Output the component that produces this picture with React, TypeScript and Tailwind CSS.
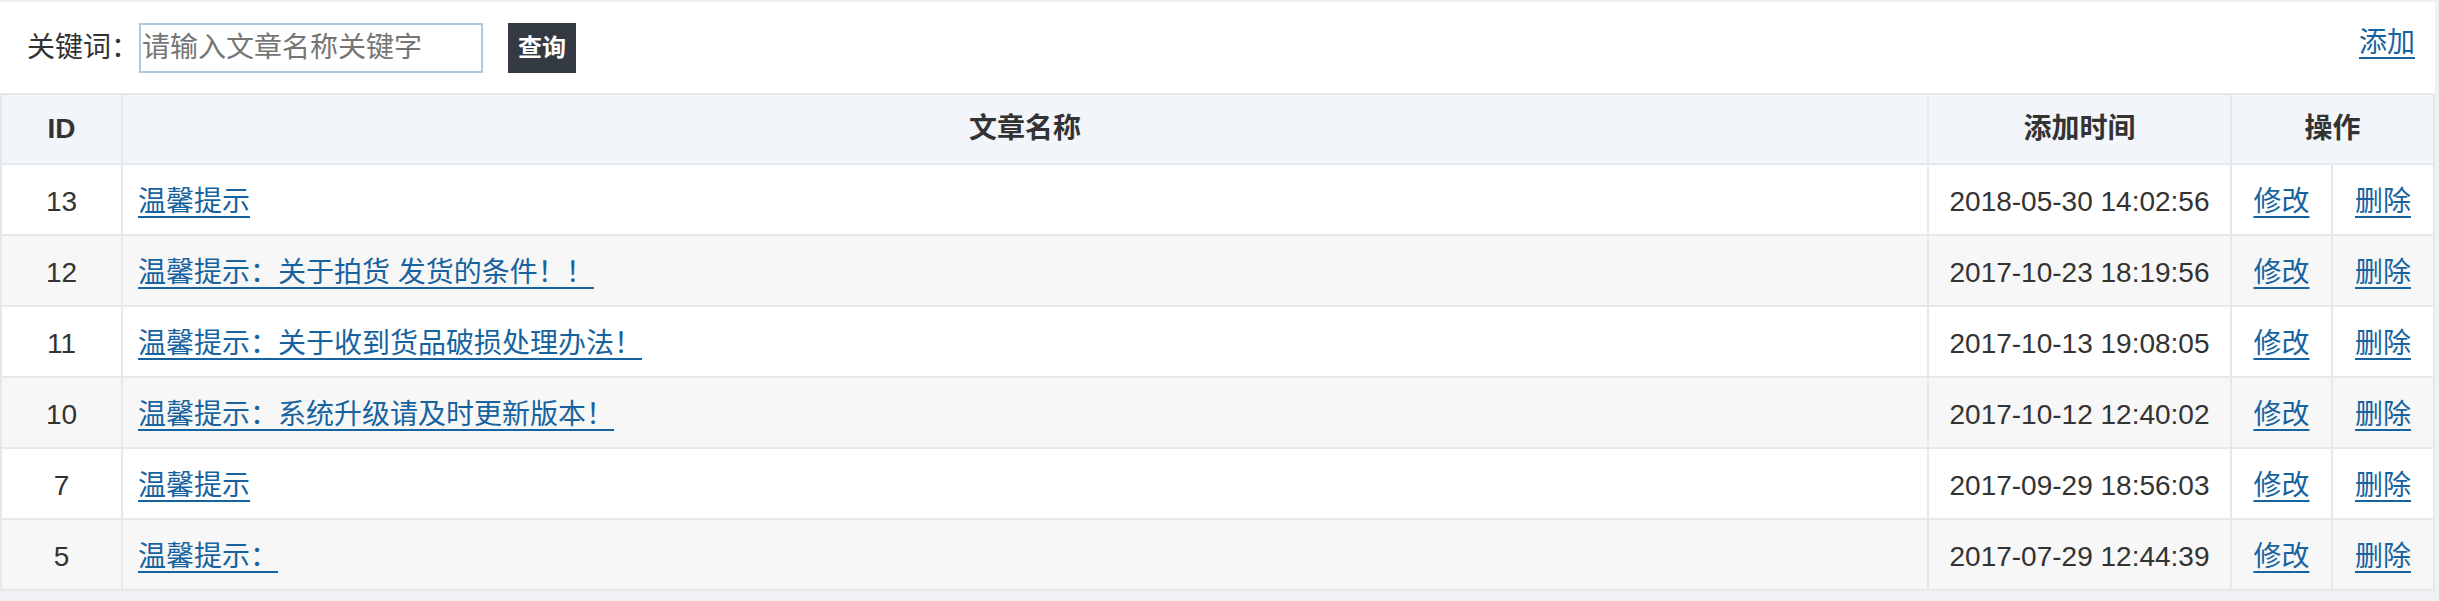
import { useState } from "react";

interface Article {
  id: number;
  title: string;
  createdAt: string;
}

const ARTICLES: Article[] = [
  { id: 13, title: "温馨提示", createdAt: "2018-05-30 14:02:56" },
  { id: 12, title: "温馨提示：关于拍货 发货的条件！！", createdAt: "2017-10-23 18:19:56" },
  { id: 11, title: "温馨提示：关于收到货品破损处理办法！", createdAt: "2017-10-13 19:08:05" },
  { id: 10, title: "温馨提示：系统升级请及时更新版本！", createdAt: "2017-10-12 12:40:02" },
  { id: 7, title: "温馨提示", createdAt: "2017-09-29 18:56:03" },
  { id: 5, title: "温馨提示：", createdAt: "2017-07-29 12:44:39" },
];

const LINK = "text-[#17639f] underline underline-offset-[5px] decoration-[2px]";

export default function App() {
  const [keyword, setKeyword] = useState("");

  return (
    <div className="min-h-screen bg-[#eff1f4] pt-[2px] pr-[4px] font-['Liberation_Sans','Noto_Sans_CJK_SC',sans-serif] text-[28px] text-[#333]">
      <div className="bg-white">
        {/* search bar */}
        <div className="flex h-[91px] items-center pl-[27px] pr-[20px]">
          <label htmlFor="kw" className="leading-[42px]">
            关键词：
          </label>
          <input
            id="kw"
            value={keyword}
            onChange={(e) => setKeyword(e.target.value)}
            placeholder="请输入文章名称关键字"
            className="h-[50px] w-[344px] border-2 border-[#accbe2] px-[1px] text-[28px] text-[#333] outline-none placeholder:text-[#757575]"
          />
          <button className="ml-[25px] h-[50px] w-[68px] bg-[#343a44] text-[24px] font-bold text-white">
            查询
          </button>
          <a href="#" className={`ml-auto self-start mt-[20px] leading-[42px] ${LINK}`}>
            添加
          </a>
        </div>

        {/* list */}
        <div className="grid grid-cols-[119px_1fr_301px_99px_100px] gap-[2px] bg-[#e5e8ec] p-[2px]">
          <div className="flex h-[68px] items-center justify-center bg-[#f2f5f9] font-bold">ID</div>
          <div className="flex items-center justify-center bg-[#f2f5f9] font-bold">文章名称</div>
          <div className="flex items-center justify-center bg-[#f2f5f9] font-bold">添加时间</div>
          <div className="col-span-2 flex items-center justify-center bg-[#f2f5f9] font-bold">操作</div>

          {ARTICLES.map((a, i) => {
            const bg = i % 2 === 1 ? "bg-[#f7f7f7]" : "bg-white";
            return (
              <div key={a.id} className="contents">
                <div className={`flex h-[69px] items-center justify-center pt-[4px] ${bg}`}>{a.id}</div>
                <div className={`flex items-center pl-[15px] pt-[4px] ${bg}`}>
                  <a href="#" className={LINK}>
                    {a.title}
                  </a>
                </div>
                <div className={`flex items-center justify-center pt-[4px] ${bg}`}>{a.createdAt}</div>
                <div className={`flex items-center justify-center pt-[4px] ${bg}`}>
                  <a href="#" className={LINK}>
                    修改
                  </a>
                </div>
                <div className={`flex items-center justify-center pt-[4px] ${bg}`}>
                  <a href="#" className={LINK}>
                    删除
                  </a>
                </div>
              </div>
            );
          })}
        </div>
      </div>
    </div>
  );
}
